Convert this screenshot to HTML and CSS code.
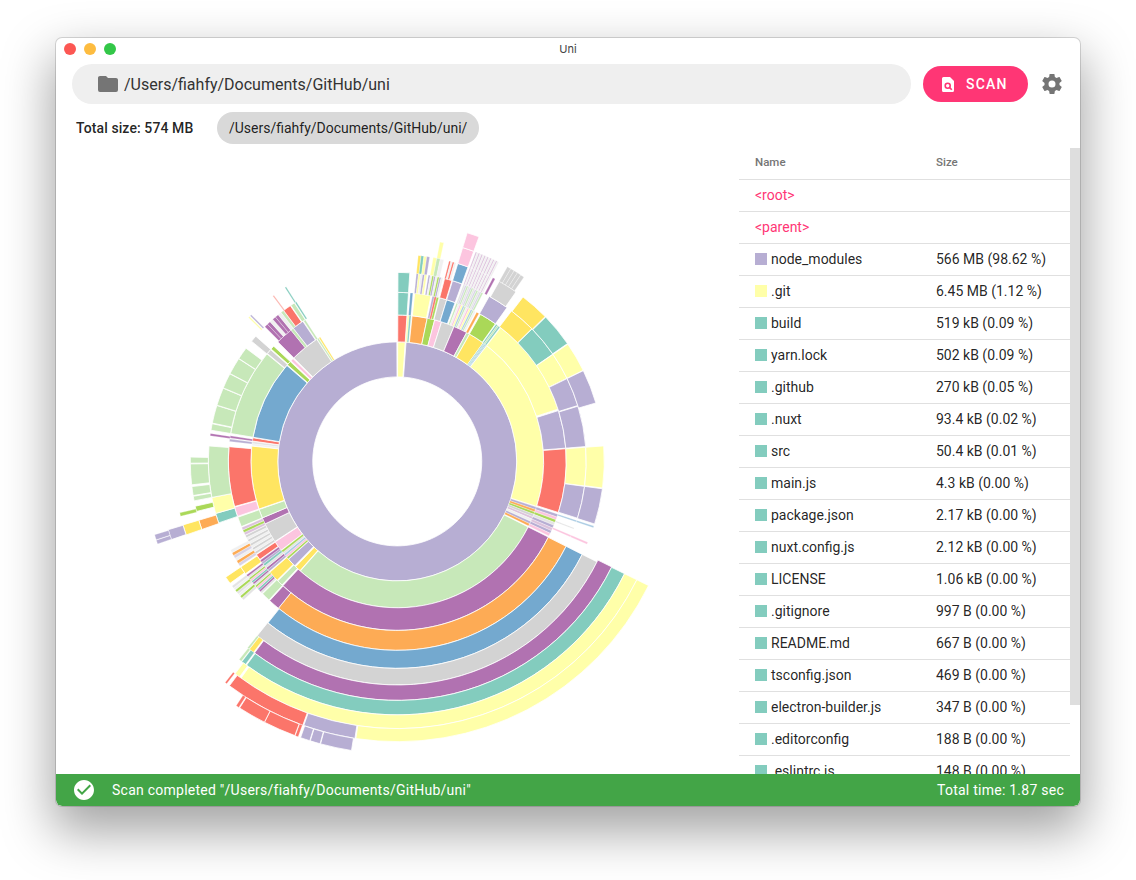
FILE: index.html
```html
<!DOCTYPE html>
<html lang="en">
<head>
    <meta charset="UTF-8">
    <meta name="viewport" content="width=device-width, initial-scale=1.0">
    <title>Uni</title>
    <link rel="stylesheet" href="styles.css">
</head>
<body>
    <div class="window">
        <div class="titlebar">
            <div class="lights">
                <span class="light light-close"></span>
                <span class="light light-min"></span>
                <span class="light light-max"></span>
            </div>
            <span class="title">Uni</span>
        </div>

        <div class="toolbar">
            <div class="path-input">
                <svg class="folder" viewBox="0 0 24 24"><path d="M10,4H4C2.89,4 2,4.89 2,6V18A2,2 0 0,0 4,20H20A2,2 0 0,0 22,18V8C22,6.89 21.1,6 20,6H12L10,4Z"/></svg>
                <span>/Users/fiahfy/Documents/GitHub/uni</span>
            </div>
            <button class="scan">
                <svg class="scan-icon" viewBox="0 0 12 15">
                    <path class="scan-file" d="M1.5,0H8L12,4V13.5A1.5,1.5 0 0,1 10.500,15H1.500A1.500,1.500 0 0,1 0,13.500V1.500A1.500,1.500 0 0,1 1.500,0Z"/>
                    <circle class="scan-lens" cx="5.700" cy="8.700" r="2.500"/>
                    <path class="scan-lens" d="M7.600,10.600L9.800,12.800"/>
                </svg>
                <span>Scan</span>
            </button>
            <svg class="gear" viewBox="0 0 24 24"><path d="M12,15.500A3.500,3.500 0 0,1 8.500,12A3.500,3.500 0 0,1 12,8.500A3.500,3.500 0 0,1 15.500,12A3.500,3.500 0 0,1 12,15.500M19.430,12.970C19.470,12.650 19.500,12.330 19.500,12C19.500,11.670 19.470,11.340 19.430,11L21.540,9.370C21.730,9.220 21.780,8.950 21.660,8.730L19.660,5.270C19.540,5.050 19.270,4.960 19.050,5.050L16.560,6.050C16.040,5.660 15.500,5.320 14.870,5.070L14.500,2.420C14.460,2.180 14.250,2 14,2H10C9.750,2 9.540,2.180 9.500,2.420L9.130,5.070C8.500,5.320 7.960,5.660 7.440,6.050L4.950,5.050C4.730,4.960 4.460,5.050 4.340,5.270L2.340,8.730C2.210,8.950 2.270,9.220 2.460,9.370L4.570,11C4.530,11.340 4.500,11.670 4.500,12C4.500,12.330 4.530,12.650 4.570,12.970L2.460,14.630C2.270,14.780 2.210,15.050 2.340,15.270L4.340,18.730C4.460,18.950 4.730,19.030 4.950,18.950L7.440,17.940C7.960,18.340 8.500,18.680 9.130,18.930L9.500,21.580C9.540,21.820 9.750,22 10,22H14C14.250,22 14.460,21.820 14.500,21.580L14.870,18.930C15.500,18.670 16.040,18.340 16.560,17.940L19.050,18.950C19.270,19.030 19.540,18.950 19.660,18.730L21.660,15.270C21.780,15.050 21.730,14.780 21.540,14.630L19.430,12.970Z"/></svg>
        </div>

        <div class="summary">
            <span class="total">Total size: 574 MB</span>
            <span class="chip">/Users/fiahfy/Documents/GitHub/uni/</span>
        </div>

        <div class="main">
            <div class="chart">
                <svg id="sunburst" viewBox="0 0 683 626" width="683" height="626"></svg>
            </div>
            <div class="list">
                <table>
                    <thead>
                        <tr><th class="col-name">Name</th><th>Size</th></tr>
                    </thead>
                    <tbody>
                        <tr><td class="link">&lt;root&gt;</td><td></td></tr>
                        <tr><td class="link">&lt;parent&gt;</td><td></td></tr>
                        <tr><td><i class="swatch lav"></i>node_modules</td><td>566 MB (98.62 %)</td></tr>
                        <tr><td><i class="swatch yel"></i>.git</td><td>6.45 MB (1.12 %)</td></tr>
                        <tr><td><i class="swatch teal"></i>build</td><td>519 kB (0.09 %)</td></tr>
                        <tr><td><i class="swatch teal"></i>yarn.lock</td><td>502 kB (0.09 %)</td></tr>
                        <tr><td><i class="swatch teal"></i>.github</td><td>270 kB (0.05 %)</td></tr>
                        <tr><td><i class="swatch teal"></i>.nuxt</td><td>93.4 kB (0.02 %)</td></tr>
                        <tr><td><i class="swatch teal"></i>src</td><td>50.4 kB (0.01 %)</td></tr>
                        <tr><td><i class="swatch teal"></i>main.js</td><td>4.3 kB (0.00 %)</td></tr>
                        <tr><td><i class="swatch teal"></i>package.json</td><td>2.17 kB (0.00 %)</td></tr>
                        <tr><td><i class="swatch teal"></i>nuxt.config.js</td><td>2.12 kB (0.00 %)</td></tr>
                        <tr><td><i class="swatch teal"></i>LICENSE</td><td>1.06 kB (0.00 %)</td></tr>
                        <tr><td><i class="swatch teal"></i>.gitignore</td><td>997 B (0.00 %)</td></tr>
                        <tr><td><i class="swatch teal"></i>README.md</td><td>667 B (0.00 %)</td></tr>
                        <tr><td><i class="swatch teal"></i>tsconfig.json</td><td>469 B (0.00 %)</td></tr>
                        <tr><td><i class="swatch teal"></i>electron-builder.js</td><td>347 B (0.00 %)</td></tr>
                        <tr><td><i class="swatch teal"></i>.editorconfig</td><td>188 B (0.00 %)</td></tr>
                        <tr><td><i class="swatch teal"></i>.eslintrc.js</td><td>148 B (0.00 %)</td></tr>
                    </tbody>
                </table>
            </div>
            <div class="scrollbar"><div class="thumb"></div></div>
        </div>

        <div class="status">
            <svg class="check" viewBox="0 0 24 24"><path d="M12 2C6.500 2 2 6.500 2 12S6.500 22 12 22 22 17.500 22 12 17.500 2 12 2M10 17L5 12L6.410 10.590L10 14.170L17.590 6.580L19 8L10 17Z"/></svg>
            <span class="status-text">Scan completed "/Users/fiahfy/Documents/GitHub/uni"</span>
            <span>Total time: 1.87 sec</span>
        </div>
    </div>
    <script src="script.js"></script>
</body>
</html>
```

FILE: styles.css
```css
* {
    box-sizing: border-box;
}
body {
    margin: 0;
    padding: 38px 0 0 56px;
    height: 880px;
    overflow: hidden;
    background: white;
    font-family: Roboto, sans-serif;
    color: rgba(0, 0, 0, 0.87);
}
.window {
    width: 1024px;
    height: 768px;
    display: flex;
    flex-direction: column;
    background: white;
    border-radius: 6px;
    overflow: hidden;
    box-shadow: 0 0 0 1px rgba(0, 0, 0, 0.14), 0 22px 50px 4px rgba(0, 0, 0, 0.36);
}
.titlebar {
    flex: none;
    height: 22px;
    display: flex;
    align-items: center;
    justify-content: center;
    position: relative;
}
.lights {
    position: absolute;
    left: 8px;
    top: 5px;
    display: flex;
    gap: 8px;
}
.light {
    width: 12px;
    height: 12px;
    border-radius: 50%;
}
.light-close { background: #fc5753; }
.light-min { background: #fdbc40; }
.light-max { background: #33c748; }
.title {
    font-family: Inter, sans-serif;
    font-size: 11px;
    color: #444;
}
.toolbar {
    flex: none;
    height: 44px;
    padding: 4px 16px 0 16px;
    display: flex;
    align-items: center;
}
.path-input {
    flex: 1;
    height: 40px;
    padding-left: 24px;
    display: flex;
    align-items: center;
    gap: 4px;
    background: #efefef;
    border-radius: 20px;
    font-size: 16px;
    color: #333;
}
.folder {
    width: 24px;
    height: 24px;
    fill: #757575;
}
.scan {
    width: 105px;
    height: 36px;
    margin-left: 12px;
    padding: 0 0 0 19px;
    display: flex;
    align-items: center;
    gap: 12px;
    border: none;
    border-radius: 18px;
    background: #ff3675;
    color: white;
    font-family: Roboto, sans-serif;
    font-size: 14px;
    font-weight: 500;
    letter-spacing: 1.2px;
    text-transform: uppercase;
}
.scan-icon {
    width: 12px;
    height: 15px;
}
.scan-file {
    fill: white;
}
.scan-lens {
    fill: none;
    stroke: #ff3675;
    stroke-width: 1.6;
}
.gear {
    width: 24px;
    height: 24px;
    margin-left: 12px;
    fill: #757575;
}
.summary {
    flex: none;
    height: 44px;
    padding: 4px 0 0 20px;
    display: flex;
    align-items: center;
}
.total {
    width: 141px;
    font-size: 14px;
    font-weight: 500;
    letter-spacing: 0.1px;
}
.chip {
    height: 32px;
    padding: 0 12px;
    display: flex;
    align-items: center;
    background: #d9d9d9;
    border-radius: 16px;
    font-size: 14px;
}
.main {
    flex: 1;
    min-height: 0;
    display: flex;
}
.chart {
    flex: none;
    width: 683px;
}
.chart svg {
    display: block;
}
.list {
    flex: none;
    width: 331px;
    overflow: hidden;
}
table {
    width: 100%;
    border-collapse: collapse;
    font-size: 14px;
}
th {
    height: 31px;
    padding: 0 0 2px 0;
    text-align: left;
    font-size: 11.5px;
    font-weight: 500;
    color: #757575;
    border-bottom: 1px solid #e0e0e0;
}
td {
    height: 32px;
    padding: 0;
    border-bottom: 1px solid #e0e0e0;
    white-space: nowrap;
}
.col-name,
td:first-child {
    width: 197px;
    padding-left: 16px;
}
.link {
    color: #ff3675;
}
.swatch {
    display: inline-block;
    width: 12px;
    height: 12px;
    margin-right: 4px;
    vertical-align: -1px;
}
.lav { background: #b7aed3; }
.yel { background: #ffffa9; }
.teal { background: #83ccbe; }
.scrollbar {
    flex: none;
    width: 10px;
}
.thumb {
    height: 557px;
    background: #dedede;
}
.status {
    flex: none;
    height: 32px;
    padding: 0 16px;
    display: flex;
    align-items: center;
    background: #43a547;
    color: white;
    font-size: 14px;
    letter-spacing: 0.25px;
    border-bottom-left-radius: 6px;
    border-bottom-right-radius: 6px;
}
.check {
    width: 24px;
    height: 24px;
    fill: white;
}
.status-text {
    flex: 1;
    margin-left: 16px;
}
```

FILE: script.js
```js
// sunburst of the scanned folder, angles in degrees clockwise from 12 o'clock
const colors = {
    lav: "#b7aed3", yel: "#ffffa9", teal: "#83ccbe", red: "#fb756a",
    blu: "#74a9cf", org: "#fdab55", grn: "#c7e8b9", gold: "#ffe561",
    mag: "#b172b1", gry: "#d3d3d3", lim: "#aad858", pnk: "#fcc5df",
    pale: "#f0f0f0", lmag: "#dcc3dc", lgry: "#e4e4e4", lblu: "#a9cbe3",
    lred: "#fcb4ae", llav: "#d8d3e6"
};

// [ring, start, end, colour]
const arcs = [
    [0, 0.2, 3.8, "yel"], [0, 4.2, 359.8, "lav"],

    // ring 1
    [1, 0.2, 3.8, "red"], [1, 5.8, 11.8, "org"], [1, 11.8, 14.8, "lim"], [1, 14.8, 17.6, "pnk"],
    [1, 17.6, 22.8, "gry"], [1, 22.8, 28.3, "mag"], [1, 28.3, 29.6, "grn"], [1, 29.6, 35.9, "gold"],
    [1, 37.7, 107.9, "yel"], [1, 116.6, 221.5, "grn"], [1, 221.7, 224, "gold"], [1, 224.5, 228, "lav"],
    [1, 232.6, 236.6, "pnk"], [1, 236.8, 244.7, "gry"], [1, 244.7, 247.3, "mag"], [1, 247.3, 250.8, "grn"],
    [1, 251, 276, "gold"], [1, 278, 279.3, "red"], [1, 279.5, 311, "blu"], [1, 311.3, 313, "lim"],
    [1, 313.4, 314.6, "pnk"], [1, 315, 326.6, "gry"], [1, 326.8, 327.4, "grn"], [1, 327.6, 328.2, "gold"],

    // ring 2
    [2, 0.2, 3.8, "teal"], [2, 4.4, 5.3, "blu"], [2, 5.9, 11.5, "yel"], [2, 14.5, 17, "gry"],
    [2, 17, 20, "blu"], [2, 28, 28.9, "org"], [2, 29.5, 35.5, "lim"], [2, 37.7, 72, "yel"],
    [2, 72.5, 85.5, "lav"], [2, 85.7, 107.6, "red"], [2, 116.6, 222.6, "mag"], [2, 223, 225, "grn"],
    [2, 225.3, 229, "gold"], [2, 234.5, 236.5, "red"], [2, 247.3, 250.7, "grn"], [2, 251, 254.3, "pnk"],
    [2, 254.5, 275, "red"], [2, 276.8, 277.6, "lav"], [2, 278, 278.7, "mag"], [2, 279.5, 309.5, "grn"],
    [2, 309.7, 311.4, "gry"], [2, 311.7, 313, "lim"], [2, 315, 321, "mag"], [2, 321, 322, "grn"],
    [2, 322, 326, "lav"], [2, 326.3, 327, "grn"],

    // ring 3
    [3, 0.2, 3.8, "teal"], [3, 14.5, 16.8, "red"], [3, 17, 20, "lav"], [3, 29.1, 35.5, "lav"],
    [3, 37.2, 45.4, "gold"], [3, 45.5, 55.4, "teal"], [3, 55.5, 63.9, "yel"], [3, 64, 72.8, "lav"],
    [3, 73, 85.5, "lav"], [3, 85.7, 97.5, "yel"], [3, 97.6, 107.5, "lav"], [3, 116.7, 219, "org"],
    [3, 219, 222.5, "mag"], [3, 222.8, 225.5, "grn"], [3, 233.5, 236, "gold"], [3, 251, 254, "teal"],
    [3, 254, 259, "yel"], [3, 259, 274.7, "grn"], [3, 277.8, 278.5, "mag"], [3, 279.5, 281.5, "grn"],
    [3, 281.7, 287.2, "grn"], [3, 287.3, 292.8, "grn"], [3, 292.9, 297.6, "grn"], [3, 297.7, 302.9, "grn"],
    [3, 303, 306.8, "grn"], [3, 309.5, 311.5, "gry"], [3, 322, 323, "grn"], [3, 323, 325.5, "red"],
    [3, 325.7, 327, "grn"], [3, 327.2, 327.7, "teal"],

    // ring 4
    [4, 17, 20, "blu"], [4, 27.5, 28.2, "mag"], [4, 29.5, 35, "gry"], [4, 37.4, 45.6, "gold"],
    [4, 45.8, 55.3, "teal"], [4, 55.5, 63.9, "yel"], [4, 64, 73.6, "lav"], [4, 85.7, 97.4, "yel"],
    [4, 97.6, 107.6, "lav"], [4, 116.7, 218.7, "blu"], [4, 233.9, 236, "gold"], [4, 250.8, 253.5, "org"],
    [4, 256, 257.5, "lim"], [4, 259, 260.3, "grn"], [4, 260.5, 263, "grn"], [4, 263.5, 269.3, "grn"],
    [4, 269.5, 271.2, "grn"], [4, 314, 314.4, "yel"], [4, 314.7, 315.1, "lav"], [4, 323, 323.4, "lred"],
    [4, 327.1, 327.5, "teal"],

    // ring 5 and out
    [5, 11, 12, "yel"], [5, 17, 20, "pnk"], [5, 116.7, 218.8, "gry"], [5, 250.8, 253.5, "gold"],
    [5, 255.8, 256.7, "lim"], [6, 17, 20, "pnk"], [6, 116.2, 216.7, "mag"], [6, 217, 218.2, "gold"],
    [6, 218.3, 218.8, "grn"], [6, 250.9, 253.4, "lav"],
    [7, 116.3, 216.5, "teal"], [7, 216.8, 217.8, "teal"], [7, 218, 218.6, "grn"], [7, 252, 253.2, "lav"],
    [7, 251, 251.9, "lav"], [8, 116.3, 215.8, "yel"], [8, 216.2, 217.4, "yel"],
    [9, 116.3, 188.5, "yel"], [9, 188.7, 199.5, "lav"], [9, 199.7, 216.8, "red"], [9, 217.5, 217.9, "red"],
    [10, 189, 195.2, "lav"], [10, 195.3, 197.3, "lav"], [10, 197.4, 199.3, "lav"],
    [10, 199.8, 200.4, "red"], [10, 200.5, 207, "red"], [10, 207, 212.6, "red"], [10, 212.8, 213.4, "red"]
];

// [ring, start, end, number of stripes, colours]: fans of tiny files
const fans = [
    [1, 4, 5.4, 2, ["yel", "teal"]],
    [1, 36, 37.5, 4, ["teal", "lblu"]],
    [1, 108.2, 116.2, 8, ["lav", "org", "lim", "gry", "lmag", "pale"]],
    [1, 228.2, 232.4, 5, ["lim", "pnk", "lblu", "lgry"]],
    [1, 276.2, 277.8, 2, ["pale", "lgry"]],
    [2, 12, 14.2, 3, ["lav", "red", "lim"]],
    [2, 20.5, 27.6, 12, ["grn", "pale", "pnk", "yel", "lblu"]],
    [2, 35.8, 37.4, 3, ["teal", "grn"]],
    [2, 108.2, 116.2, 8, ["lav", "pnk", "lim", "lgry", "lav", "lmag"]],
    [2, 229.3, 234.2, 6, ["lav", "mag", "lgry", "teal"]],
    [2, 236.8, 244, 9, ["gry", "pale"]],
    [2, 244.2, 247, 3, ["lmag", "lim"]],
    [3, 5.8, 9, 5, ["lav", "yel", "pale"]],
    [3, 9.5, 14, 8, ["lav", "pale", "lim"]],
    [3, 20.5, 27, 12, ["lgry", "llav", "grn"]],
    [3, 108.2, 108.7, 1, ["lblu"]],
    [3, 110.6, 111, 1, ["lgry"]],
    [3, 113, 113.6, 1, ["pnk"]],
    [3, 225.8, 233, 12, ["lgry", "mag", "teal", "pnk", "lim"]],
    [3, 236.4, 242, 6, ["llav", "org", "pale"]],
    [3, 315.5, 322, 6, ["mag", "mag", "pale"]],
    [4, 5.8, 9, 4, ["gold", "teal", "yel", "lav"]],
    [4, 10, 13, 3, ["yel", "grn", "pale"]],
    [4, 14.5, 16.5, 4, ["red", "pale"]],
    [4, 20.5, 27, 16, ["lmag", "pale"]],
    [4, 108.2, 108.7, 1, ["lblu"]],
    [4, 113, 113.6, 1, ["pnk"]],
    [4, 228, 233, 7, ["lgry", "lim", "pale"]],
    [5, 20.5, 27, 16, ["lmag", "pale"]],
    [5, 29.5, 34.5, 5, ["gry"]]
];

const svg = document.getElementById("sunburst");
const cx = 341.3;
const cy = 313.4;

function radius(ring) {
    return 84.5 * Math.sqrt(ring + 1);
}

function point(r, deg) {
    let a = deg * Math.PI / 180;
    return (cx + r * Math.sin(a)).toFixed(2) + "," + (cy - r * Math.cos(a)).toFixed(2);
}

function addArc(ring, start, end, color, strokeWidth) {
    let inner = radius(ring);
    let outer = radius(ring + 1);
    let big = end - start > 180 ? 1 : 0;
    let d = "M" + point(inner, start)
        + "L" + point(outer, start)
        + "A" + outer + "," + outer + " 0 " + big + " 1 " + point(outer, end)
        + "L" + point(inner, end)
        + "A" + inner + "," + inner + " 0 " + big + " 0 " + point(inner, start) + "Z";
    let path = document.createElementNS("http://www.w3.org/2000/svg", "path");
    path.setAttribute("d", d);
    path.setAttribute("fill", colors[color]);
    path.setAttribute("stroke", "#fff");
    path.setAttribute("stroke-width", strokeWidth);
    svg.appendChild(path);
}

arcs.forEach(arc => addArc(arc[0], arc[1], arc[2], arc[3], arc[2] - arc[1] < 1.2 ? 0.3 : 0.8));

fans.forEach(fan => {
    let step = (fan[2] - fan[1]) / fan[3];
    for (let i = 0; i < fan[3]; i++) {
        let start = fan[1] + i * step;
        addArc(fan[0], start, start + step, fan[4][i % fan[4].length], 0.3);
    }
});
```
